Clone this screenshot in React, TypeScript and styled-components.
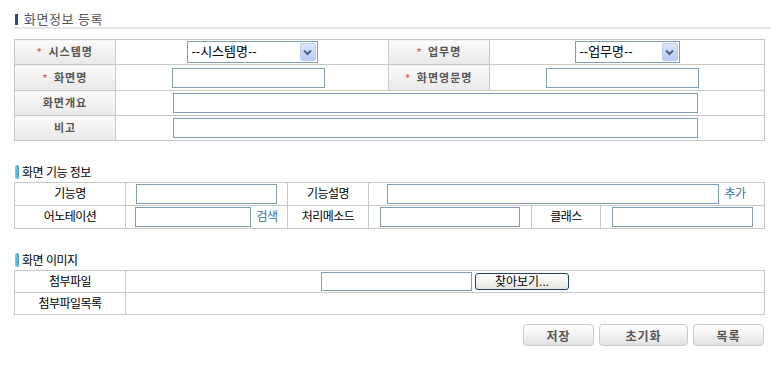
import React from "react";
import styled, { createGlobalStyle } from "styled-components";

const GlobalStyle = createGlobalStyle`
  body {
    margin: 0;
    background: #fff;
    font-family: "Liberation Sans", "Noto Sans CJK KR", sans-serif;
    font-size: 12px;
    color: #000;
  }
`;

const Page = styled.div`
  width: 757px;
  padding: 13px 10px 0 14px;
`;

const TitleRow = styled.div`
  display: flex;
  align-items: center;
  gap: 6px;
  height: 13px;
  padding: 0 0 1px 1px;
  border-bottom: 2px solid #e6e6e6;
  margin-bottom: 10px;
`;

const TitleBar = styled.span`
  width: 3px;
  height: 11px;
  background: #24508a;
`;

const TitleText = styled.h1`
  margin: 0;
  font-size: 13px;
  font-weight: normal;
  line-height: 13px;
  color: #555;
  letter-spacing: 0.5px;
`;

const SectionHead = styled.div<{ $top: number }>`
  display: flex;
  align-items: flex-end;
  gap: 3px;
  margin-top: ${(p) => p.$top}px;
  margin-bottom: 3px;
  padding-left: 1px;
  height: 14px;
`;

const Pill = styled.span`
  width: 4px;
  height: 14px;
  border-radius: 2px;
  background: linear-gradient(to right, #7fd0e8, #3a9cc4);
`;

const SectionText = styled.span`
  font-size: 12px;
  line-height: 12px;
  letter-spacing: -0.5px;
`;

const Table = styled.table`
  width: 750px;
  border-collapse: collapse;
  table-layout: fixed;
  border: 1px solid #c4c4c4;
`;

const Row = styled.tr<{ $h: number }>`
  height: ${(p) => p.$h}px;
`;

const Label = styled.th<{ $shade?: boolean }>`
  border: 1px solid #c8c8c8;
  padding: 0;
  text-align: center;
  line-height: 14px;
  font-size: ${(p) => (p.$shade ? "11px" : "12px")};
  font-weight: ${(p) => (p.$shade ? "bold" : "normal")};
  letter-spacing: ${(p) => (p.$shade ? "1px" : "-0.5px")};
  color: ${(p) => (p.$shade ? "#555" : "#000")};
  background: ${(p) =>
    p.$shade ? "linear-gradient(to bottom, #fbfbfb, #e9e9e9)" : "#fff"};
`;

const Req = styled.span`
  color: #d83c3c;
  font-weight: normal;
  margin-right: 6px;
`;

const Cell = styled.td<{ $indent?: number }>`
  border: 1px solid #c8c8c8;
  padding: 0 0 0 ${(p) => p.$indent ?? 0}px;
  line-height: 14px;
  text-align: ${(p) => (p.$indent ? "left" : "center")};
`;

const Inline = styled.div`
  display: inline-flex;
  align-items: center;
  gap: 5px;
  vertical-align: middle;
`;

const Input = styled.input<{ $w: number; $h?: number }>`
  box-sizing: border-box;
  width: ${(p) => p.$w}px;
  height: ${(p) => p.$h ?? 20}px;
  border: 1px solid #7f9db9;
  padding: 0 2px;
  margin: 0;
  background: #fff;
  vertical-align: middle;
`;

const SelectBox = styled.div<{ $w: number }>`
  box-sizing: border-box;
  display: inline-flex;
  align-items: center;
  justify-content: space-between;
  width: ${(p) => p.$w}px;
  height: 22px;
  border: 1px solid #7f9db9;
  padding: 1px 1px 1px 4px;
  vertical-align: middle;
  background: #fff;
  font-size: 13px;
  line-height: 18px;
`;

const ArrowBtn = styled.span`
  box-sizing: border-box;
  display: flex;
  align-items: center;
  justify-content: center;
  width: 16px;
  height: 18px;
  border: 1px solid #b9cbf3;
  border-radius: 2px;
  background: linear-gradient(to bottom, #dde7fd, #b7cbf5);
`;

const Link = styled.a`
  color: #3a6ea5;
  font-size: 12px;
  text-decoration: none;
  letter-spacing: -0.5px;
`;

const FileBtn = styled.button`
  box-sizing: border-box;
  width: 94px;
  height: 17px;
  padding: 0;
  border: 1px solid #1f3f66;
  border-radius: 3px;
  background: linear-gradient(to bottom, #ffffff, #e6e6e0);
  font-family: inherit;
  font-size: 12px;
  line-height: 14px;
  color: #000;
`;

const Actions = styled.div`
  display: flex;
  justify-content: flex-end;
  gap: 5px;
  margin-top: 9px;
  width: 750px;
`;

const ActionBtn = styled.button<{ $w: number }>`
  box-sizing: border-box;
  width: ${(p) => p.$w}px;
  height: 22px;
  padding: 0;
  border: 1px solid #cacaca;
  border-radius: 4px;
  background: linear-gradient(to bottom, #ffffff 0%, #f4f4f4 45%, #e2e2e2 100%);
  font-family: inherit;
  font-size: 12px;
  font-weight: bold;
  letter-spacing: 1px;
  color: #555;
`;

function Chevron() {
  return (
    <svg width="9" height="7" viewBox="0 0 9 7">
      <path d="M1 1.5 L4.5 5 L8 1.5" fill="none" stroke="#4a5f8a" strokeWidth="2" />
    </svg>
  );
}

function Select({ width, text }: { width: number; text: string }) {
  return (
    <SelectBox $w={width}>
      <span>{text}</span>
      <ArrowBtn>
        <Chevron />
      </ArrowBtn>
    </SelectBox>
  );
}

export default function App() {
  return (
    <>
      <GlobalStyle />
      <Page>
        <TitleRow>
          <TitleBar />
          <TitleText>화면정보 등록</TitleText>
        </TitleRow>

        <Table>
          <colgroup>
            <col style={{ width: 101 }} />
            <col style={{ width: 273 }} />
            <col style={{ width: 101 }} />
            <col style={{ width: 275 }} />
          </colgroup>
          <tbody>
            <Row $h={25}>
              <Label $shade>
                <Req>*</Req>시스템명
              </Label>
              <Cell>
                <Select width={131} text="--시스템명--" />
              </Cell>
              <Label $shade>
                <Req>*</Req>업무명
              </Label>
              <Cell>
                <Select width={105} text="--업무명--" />
              </Cell>
            </Row>
            <Row $h={26}>
              <Label $shade>
                <Req>*</Req>화면명
              </Label>
              <Cell $indent={56}>
                <Input $w={153} />
              </Cell>
              <Label $shade>
                <Req>*</Req>화면영문명
              </Label>
              <Cell $indent={56}>
                <Input $w={153} />
              </Cell>
            </Row>
            <Row $h={25}>
              <Label $shade>화면개요</Label>
              <Cell colSpan={3} $indent={57}>
                <Input $w={525} />
              </Cell>
            </Row>
            <Row $h={25}>
              <Label $shade>비고</Label>
              <Cell colSpan={3} $indent={57}>
                <Input $w={525} />
              </Cell>
            </Row>
          </tbody>
        </Table>

        <SectionHead $top={24}>
          <Pill />
          <SectionText>화면 기능 정보</SectionText>
        </SectionHead>
        <Table>
          <colgroup>
            <col style={{ width: 111 }} />
            <col style={{ width: 162 }} />
            <col style={{ width: 81 }} />
            <col style={{ width: 163 }} />
            <col style={{ width: 69 }} />
            <col style={{ width: 164 }} />
          </colgroup>
          <tbody>
            <Row $h={23}>
              <Label>기능명</Label>
              <Cell>
                <Input $w={141} />
              </Cell>
              <Label>기능설명</Label>
              <Cell colSpan={3}>
                <Inline>
                  <Input $w={332} />
                  <Link href="#">추가</Link>
                </Inline>
              </Cell>
            </Row>
            <Row $h={23}>
              <Label>어노테이션</Label>
              <Cell>
                <Inline>
                  <Input $w={116} />
                  <Link href="#">검색</Link>
                </Inline>
              </Cell>
              <Label>처리메소드</Label>
              <Cell>
                <Input $w={140} />
              </Cell>
              <Label>클래스</Label>
              <Cell>
                <Input $w={141} />
              </Cell>
            </Row>
          </tbody>
        </Table>

        <SectionHead $top={24}>
          <Pill />
          <SectionText>화면 이미지</SectionText>
        </SectionHead>
        <Table>
          <colgroup>
            <col style={{ width: 111 }} />
            <col style={{ width: 639 }} />
          </colgroup>
          <tbody>
            <Row $h={22}>
              <Label>첨부파일</Label>
              <Cell>
                <Inline style={{ gap: 3 }}>
                  <Input $w={151} $h={19} />
                  <FileBtn>찾아보기...</FileBtn>
                </Inline>
              </Cell>
            </Row>
            <Row $h={22}>
              <Label>첨부파일목록</Label>
              <Cell />
            </Row>
          </tbody>
        </Table>

        <Actions>
          <ActionBtn $w={71}>저장</ActionBtn>
          <ActionBtn $w={89}>초기화</ActionBtn>
          <ActionBtn $w={71}>목록</ActionBtn>
        </Actions>
      </Page>
    </>
  );
}
